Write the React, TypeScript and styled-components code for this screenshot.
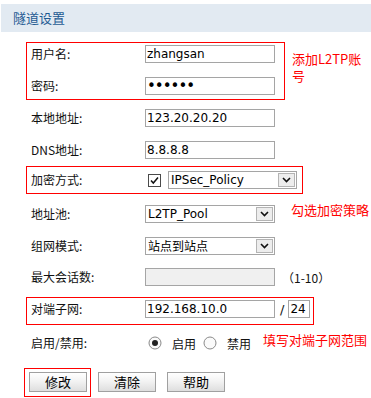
import React from "react";
import styled, { createGlobalStyle } from "styled-components";

const Global = createGlobalStyle`
  html, body { margin: 0; padding: 0; background: #fff; }
  body { font-family: "Noto Sans CJK SC", "DejaVu Sans", sans-serif; color: #000; }
`;

const Page = styled.div`
  width: 371px;
  height: 398px;
  overflow: hidden;
  padding-top: 4px;
  box-sizing: border-box;
`;

const Header = styled.div`
  margin-left: 1px;
  height: 28px;
  line-height: 28px;
  background: #e2eaf2;
  padding-left: 12px;
  font-size: 13px;
  color: #1f5a92;
`;

const Form = styled.div`
  display: flex;
  flex-direction: column;
  padding-left: 26px;
`;

const Line = styled.div<{ $top: number }>`
  display: flex;
  align-items: flex-start;
  margin-top: ${(p) => p.$top}px;
`;

const Group = styled.div<{ $w: number; $pt: number; $pb: number }>`
  box-sizing: border-box;
  width: ${(p) => p.$w}px;
  border: 1px solid #ff0000;
  padding: ${(p) => p.$pt}px 0 ${(p) => p.$pb}px 4px;
  display: flex;
  flex-direction: column;
  gap: 14px;
`;

const Row = styled.div<{ $top?: number; $plain?: boolean }>`
  display: flex;
  align-items: center;
  height: 18px;
  margin-top: ${(p) => p.$top ?? 0}px;
  padding-left: ${(p) => (p.$plain ? 5 : 0)}px;
`;

const Label = styled.span`
  width: 114px;
  flex: none;
  font-size: 12px;
  line-height: 18px;
  color: #111;
`;

const TextInput = styled.input<{ $w?: number; $dots?: boolean }>`
  box-sizing: border-box;
  width: ${(p) => p.$w ?? 130}px;
  height: 18px;
  border: 1px solid #a5a5a5;
  padding: 0 1px;
  margin: 0;
  font-family: "DejaVu Sans", sans-serif;
  font-size: ${(p) => (p.$dots ? 15 : 12)}px;
  letter-spacing: ${(p) => (p.$dots ? "-1px" : "0")};
  color: #000;
  background: ${(p) => (p.disabled ? "#f0f0f0" : "#fff")};
  outline: none;
`;

const SelectBox = styled.div<{ $w: number; $ml?: number }>`
  box-sizing: border-box;
  width: ${(p) => p.$w}px;
  height: 18px;
  margin-left: ${(p) => p.$ml ?? 0}px;
  border: 1px solid #a5a5a5;
  background: #fff;
  display: flex;
  align-items: center;
  justify-content: space-between;
  padding-left: 2px;
`;

const SelectText = styled.span<{ $cjk?: boolean }>`
  font-family: ${(p) => (p.$cjk ? '"Noto Sans CJK SC", sans-serif' : '"DejaVu Sans", sans-serif')};
  font-size: 12px;
  line-height: 16px;
  color: #000;
`;

const ArrowBox = styled.span`
  box-sizing: border-box;
  width: 17px;
  height: 14px;
  margin-right: 1px;
  border: 1px solid #b4b4b4;
  background: #ededed;
  display: flex;
  align-items: center;
  justify-content: center;
`;

const Note = styled.div<{ $ml: number; $mt: number; $w?: number }>`
  margin-left: ${(p) => p.$ml}px;
  margin-top: ${(p) => p.$mt}px;
  width: ${(p) => (p.$w ? `${p.$w}px` : "auto")};
  font-size: 13px;
  line-height: 17px;
  color: #ff0000;
  white-space: ${(p) => (p.$w ? "normal" : "nowrap")};
`;

const Hint = styled.span`
  margin-left: 7px;
  font-size: 12px;
  color: #111;
`;

const Slash = styled.span`
  margin: 0 4px 0 5px;
  font-family: "DejaVu Sans", sans-serif;
  font-size: 13px;
  color: #111;
`;

const Check = styled.span<{ $ml: number }>`
  display: flex;
  margin-left: ${(p) => p.$ml}px;
`;

const Radio = styled.span<{ $ml: number }>`
  display: flex;
  margin-left: ${(p) => p.$ml}px;
`;

const RadioText = styled.span`
  margin-left: 10px;
  font-size: 12px;
  color: #111;
`;

const ButtonRow = styled.div`
  display: flex;
  align-items: flex-start;
  margin-top: 16px;
  margin-left: -2px;
`;

const Frame = styled.div`
  border: 1px solid #ff0000;
  padding: 3px 3px 4px 4px;
  display: flex;
`;

const Button = styled.button<{ $ml?: number }>`
  box-sizing: border-box;
  width: 58px;
  height: 20px;
  margin: ${(p) => (p.$ml ? `4px 0 0 ${p.$ml}px` : "0")};
  padding: 0;
  border: 1px solid #a0a0a0;
  background: linear-gradient(#ffffff, #f3f3f3 45%, #dedede);
  font-family: "Noto Sans CJK SC", sans-serif;
  font-size: 13px;
  line-height: 18px;
  color: #000;
`;

const Chevron = () => (
  <svg width="9" height="6" viewBox="0 0 9 6">
    <polyline points="1,1 4.5,4.5 8,1" fill="none" stroke="#111" strokeWidth="1.6" />
  </svg>
);

const Select = ({ w, ml, text, cjk }: { w: number; ml?: number; text: string; cjk?: boolean }) => (
  <SelectBox $w={w} $ml={ml}>
    <SelectText $cjk={cjk}>{text}</SelectText>
    <ArrowBox>
      <Chevron />
    </ArrowBox>
  </SelectBox>
);

const RadioIcon = ({ on }: { on: boolean }) => (
  <svg width="14" height="14" viewBox="0 0 14 14">
    <circle cx="7" cy="7" r="6" fill="#fafafa" stroke="#8a8a8a" strokeWidth="1" />
    {on && <circle cx="7" cy="7" r="3" fill="#222" />}
  </svg>
);

export default function App() {
  return (
    <>
      <Global />
      <Page>
        <Header>隧道设置</Header>
        <Form>
          <Line $top={10}>
            <Group $w={259} $pt={2} $pb={4}>
              <Row>
                <Label>用户名:</Label>
                <TextInput readOnly value="zhangsan" />
              </Row>
              <Row>
                <Label>密码:</Label>
                <TextInput readOnly $dots type="password" value="123456" />
              </Row>
            </Group>
            <Note $ml={7} $mt={8} $w={72}>添加L2TP账号</Note>
          </Line>

          <Row $plain $top={9}>
            <Label>本地地址:</Label>
            <TextInput readOnly value="123.20.20.20" />
          </Row>
          <Row $plain $top={14}>
            <Label>DNS地址:</Label>
            <TextInput readOnly value="8.8.8.8" />
          </Row>

          <Line $top={7}>
            <Group $w={277} $pt={4} $pb={4}>
              <Row>
                <Label>加密方式:</Label>
                <Check $ml={3}>
                  <svg width="13" height="13" viewBox="0 0 13 13">
                    <rect x="0.5" y="0.5" width="12" height="12" fill="#fff" stroke="#4a4a4a" />
                    <polyline points="3,6.5 5.3,9 10,3.5" fill="none" stroke="#111" strokeWidth="1.5" />
                  </svg>
                </Check>
                <Select w={129} ml={7} text="IPSec_Policy" />
              </Row>
            </Group>
          </Line>

          <Row $plain $top={11}>
            <Label>地址池:</Label>
            <Select w={130} text="L2TP_Pool" />
            <Note $ml={16} $mt={-10}>勾选加密策略</Note>
          </Row>
          <Row $plain $top={14}>
            <Label>组网模式:</Label>
            <Select w={130} text="站点到站点" cjk />
          </Row>
          <Row $plain $top={13}>
            <Label>最大会话数:</Label>
            <TextInput readOnly disabled value="" />
            <Hint>（1-10）</Hint>
          </Row>

          <Line $top={11}>
            <Group $w={288} $pt={2} $pb={6}>
              <Row>
                <Label>对端子网:</Label>
                <TextInput readOnly value="192.168.10.0" />
                <Slash>/</Slash>
                <TextInput readOnly $w={22} value="24" />
              </Row>
            </Group>
          </Line>

          <Row $plain $top={9}>
            <Label>启用/禁用:</Label>
            <Radio $ml={3}>
              <RadioIcon on />
            </Radio>
            <RadioText>启用</RadioText>
            <Radio $ml={7}>
              <RadioIcon on={false} />
            </Radio>
            <RadioText>禁用</RadioText>
            <Note $ml={12} $mt={-8}>填写对端子网范围</Note>
          </Row>

          <ButtonRow>
            <Frame>
              <Button>修改</Button>
            </Frame>
            <Button $ml={7}>清除</Button>
            <Button $ml={11}>帮助</Button>
          </ButtonRow>
        </Form>
      </Page>
    </>
  );
}
